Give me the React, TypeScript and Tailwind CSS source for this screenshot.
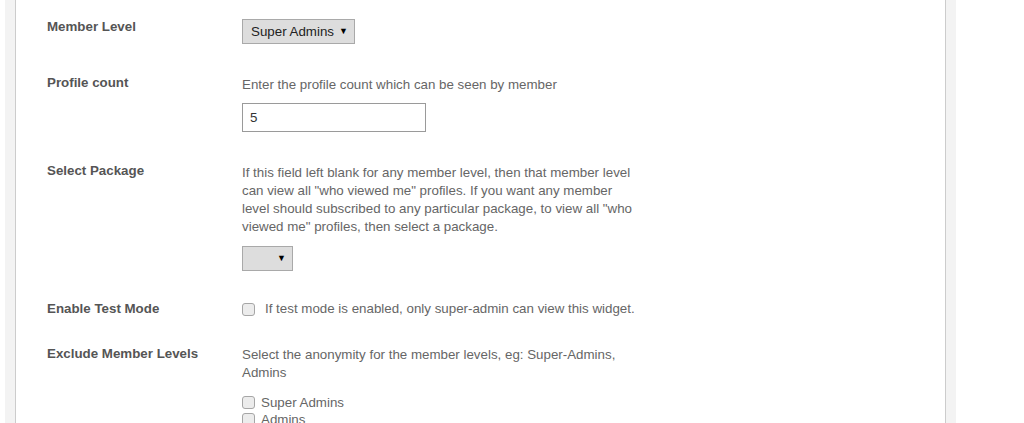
import React from "react";

const font = { fontFamily: '"Liberation Sans", Arial, sans-serif' };

function FakeSelect({ value, width }: { value?: string; width: string }) {
  return (
    <div
      className={`flex h-[25px] items-center justify-between border border-[#a9a9a9] bg-[#dddddd] pl-[8px] pr-[6px] text-[13.33px] text-[#222] ${width}`}
    >
      <span>{value}</span>
      <span className="text-[9px] leading-none text-black">▼</span>
    </div>
  );
}

function Check({ label, gap }: { label: string; gap: string }) {
  return (
    <label className={`flex items-center ${gap}`}>
      <input
        type="checkbox"
        className="h-[13px] w-[13px] shrink-0 appearance-none rounded-[3px] border border-[#a6a6a6] bg-[#ececec]"
      />
      <span>{label}</span>
    </label>
  );
}

function Row({
  label,
  top,
  children,
}: {
  label: string;
  top: string;
  children: React.ReactNode;
}) {
  return (
    <div className={`flex pl-[31px] ${top}`}>
      <div className="w-[195px] shrink-0 text-[13.33px] font-bold leading-[18px] text-[#555]">
        {label}
      </div>
      <div className="w-[400px] text-[13.33px] leading-[18px] text-[#666]">{children}</div>
    </div>
  );
}

export default function App() {
  return (
    <div className="h-[423px] overflow-hidden bg-white pl-[5px]" style={font}>
      <div className="h-full w-[951px] bg-[#f3f3f3] px-[10px]">
        <div className="h-full border-x border-[#cccccc] bg-white pt-[18px]">
          <Row label="Member Level" top="">
            <div className="pt-[1px]">
              <FakeSelect value="Super Admins" width="w-[113px]" />
            </div>
          </Row>

          <Row label="Profile count" top="mt-[30px]">
            <p className="pt-[2px]">Enter the profile count which can be seen by member</p>
            <input
              type="text"
              defaultValue="5"
              className="mt-[9px] h-[29px] w-[184px] border border-[#9a9a9a] px-[7px] text-[13.33px] text-[#333] outline-none"
            />
          </Row>

          <Row label="Select Package" top="mt-[30px]">
            <p className="pt-[2px]">
              If this field left blank for any member level, then that member level can view
              all "who viewed me" profiles. If you want any member level should subscribed to
              any particular package, to view all "who viewed me" profiles, then select a
              package.
            </p>
            <div className="mt-[10px]">
              <FakeSelect width="w-[51px]" />
            </div>
          </Row>

          <Row label="Enable Test Mode" top="mt-[29px]">
            <Check label="If test mode is enabled, only super-admin can view this widget." gap="gap-[10px]" />
          </Row>

          <Row label="Exclude Member Levels" top="mt-[27px]">
            <p className="pt-[1px]">
              Select the anonymity for the member levels, eg: Super-Admins, Admins
            </p>
            <div className="mt-[12px] flex flex-col leading-[17px]">
              <Check label="Super Admins" gap="gap-[6px]" />
              <Check label="Admins" gap="gap-[6px]" />
            </div>
          </Row>
        </div>
      </div>
    </div>
  );
}
